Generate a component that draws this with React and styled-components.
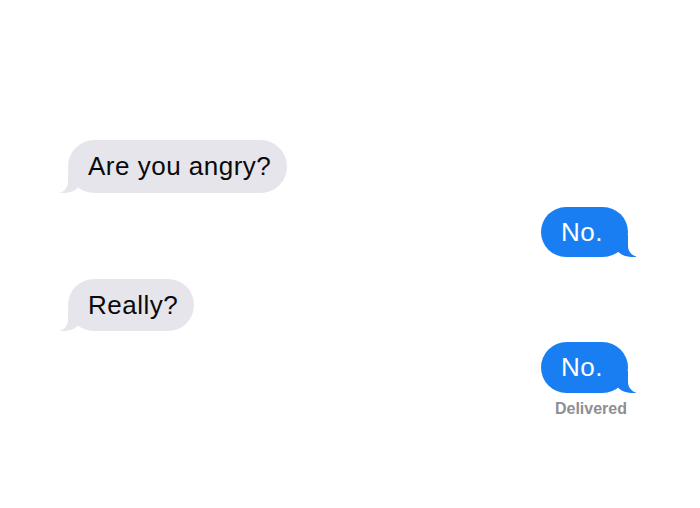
import React from 'react';
import styled, { createGlobalStyle } from 'styled-components';

const GlobalStyle = createGlobalStyle`
  html, body {
    margin: 0;
    padding: 0;
    background: #ffffff;
  }
  body {
    font-family: "Liberation Sans", Arial, Helvetica, sans-serif;
    -webkit-font-smoothing: antialiased;
  }
`;

const Screen = styled.div`
  width: 700px;
  height: 508px;
  box-sizing: border-box;
  padding: 140px 72px 0 68px;
  display: flex;
  flex-direction: column;
  overflow: hidden;
`;

const Row = styled.div`
  display: flex;
  flex-direction: column;
  align-items: ${props => (props.$mine ? 'flex-end' : 'flex-start')};
  margin-top: ${props => props.$space || 0}px;
`;

const Bubble = styled.div`
  position: relative;
  box-sizing: border-box;
  height: ${props => props.$h || 52}px;
  display: flex;
  align-items: center;
  padding: ${props => (props.$mine ? '0 25px 0 20px' : '0 16px 0 20px')};
  border-radius: 27px;
  font-size: 26px;
  letter-spacing: 0.5px;
  color: ${props => (props.$mine ? '#ffffff' : '#0a0a0a')};
  background: ${props => (props.$mine ? '#1a7ef3' : '#e6e5eb')};
  z-index: 0;

  &::before {
    content: "";
    position: absolute;
    bottom: 0;
    height: 22px;
    width: 22px;
    z-index: -1;
    background: ${props => (props.$mine ? '#1a7ef3' : '#e6e5eb')};
    ${props => (props.$mine
      ? 'right: -8px; border-bottom-left-radius: 17px 15px;'
      : 'left: -8px; border-bottom-right-radius: 17px 15px;')}
  }

  &::after {
    content: "";
    position: absolute;
    bottom: 0;
    height: 22px;
    width: 12px;
    z-index: -1;
    background: #ffffff;
    ${props => (props.$mine
      ? 'right: -12px; border-bottom-left-radius: 11px;'
      : 'left: -12px; border-bottom-right-radius: 11px;')}
  }
`;

const Status = styled.div`
  margin-top: 7px;
  margin-right: 1px;
  font-size: 16px;
  font-weight: 600;
  color: #8e8e93;
`;

const messages = [
  { text: 'Are you angry?', mine: false, space: 0, h: 53 },
  { text: 'No.', mine: true, space: 14, h: 50 },
  { text: 'Really?', mine: false, space: 22, h: 52 },
  { text: 'No.', mine: true, space: 11, h: 51, status: 'Delivered' },
];

export default function App() {
  return (
    <>
      <GlobalStyle />
      <Screen>
        {messages.map((m, i) => (
          <Row key={i} $mine={m.mine} $space={m.space}>
            <Bubble $mine={m.mine} $h={m.h}>{m.text}</Bubble>
            {m.status && <Status>{m.status}</Status>}
          </Row>
        ))}
      </Screen>
    </>
  );
}
